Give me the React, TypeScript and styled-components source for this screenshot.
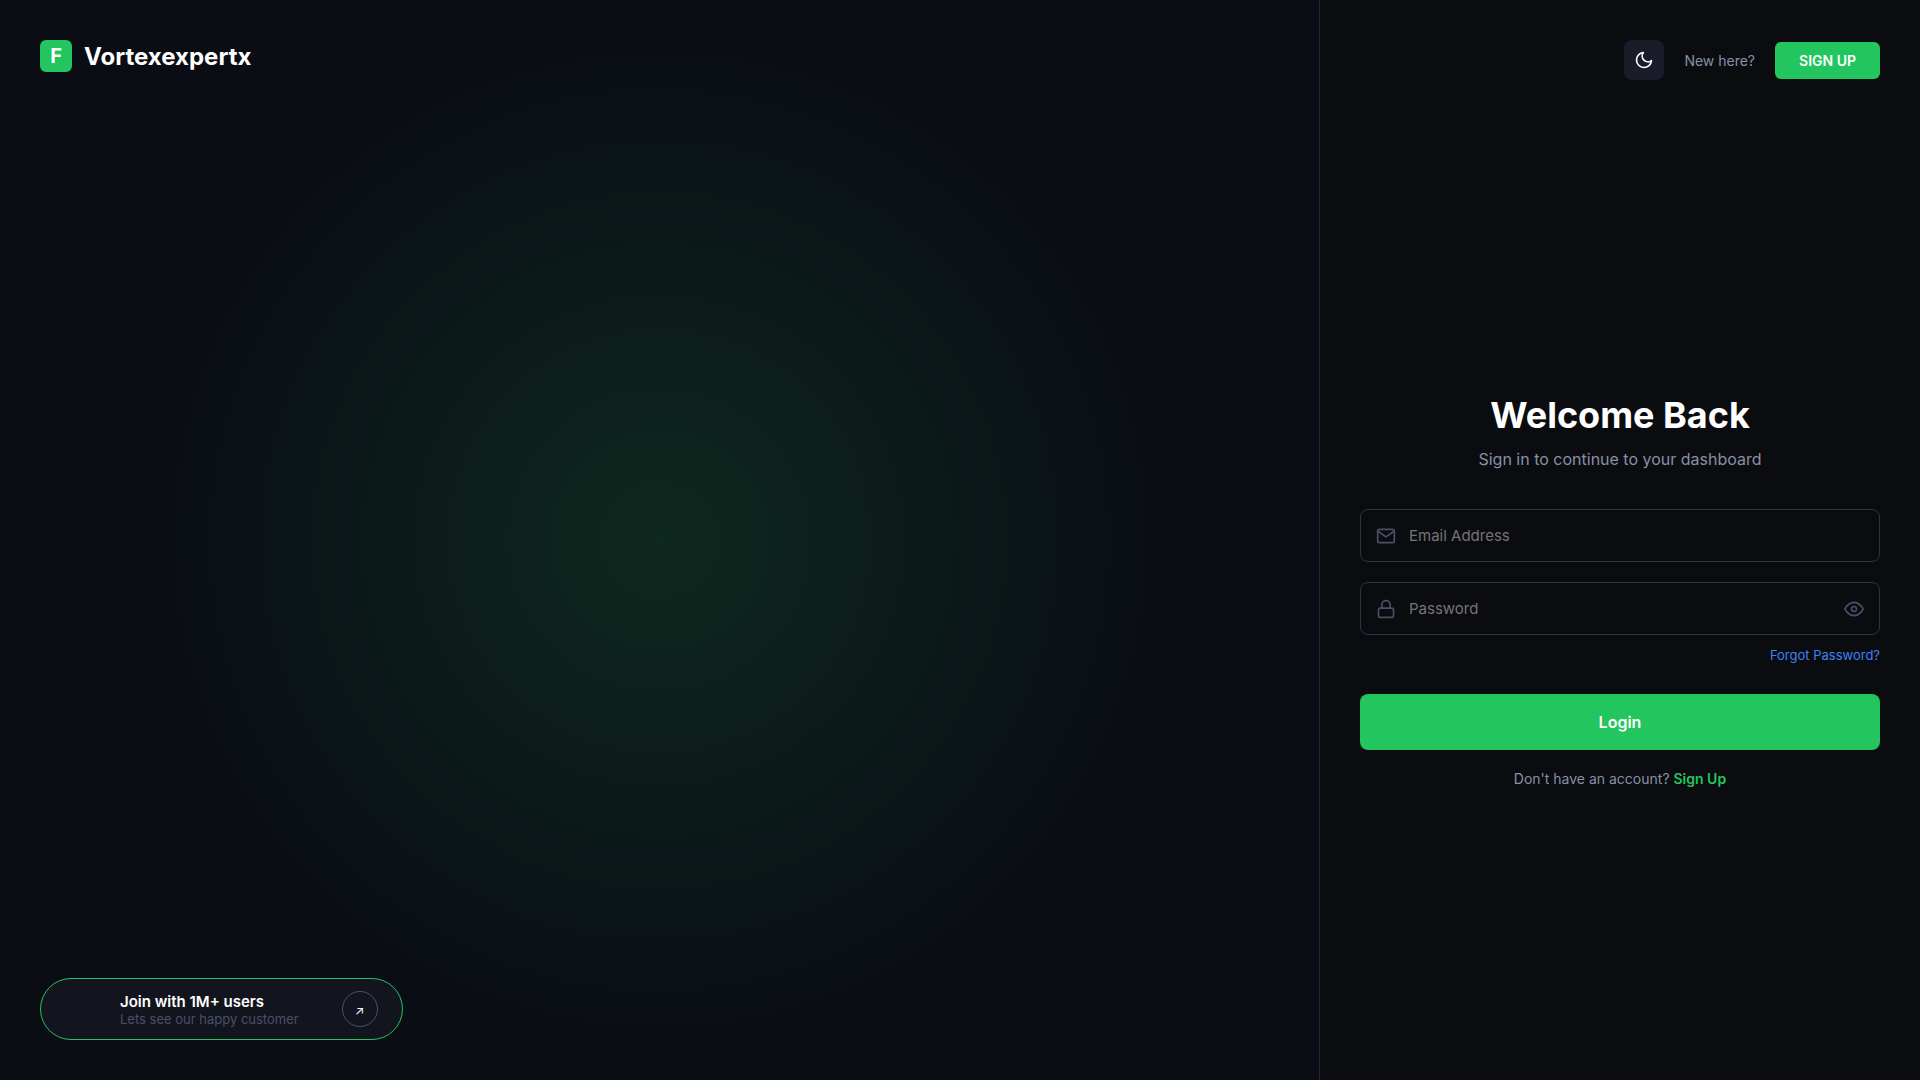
import React, { useState } from 'react';
import styled, { createGlobalStyle } from 'styled-components';
import { FiMoon, FiMail, FiLock, FiEye, FiEyeOff } from 'react-icons/fi';

const GlobalStyle = createGlobalStyle`
  *, *::before, *::after { box-sizing: border-box; }
  body { margin: 0; background: #0b0c10; color: #fff; font-family: Inter, "Liberation Sans", sans-serif; }
  h1, p { margin: 0; }
  a { text-decoration: none; }
  button, input { font-family: inherit; }
`;

const Page = styled.div`
  display: flex;
  min-height: 100vh;
`;

const Showcase = styled.main`
  flex: 1;
  min-width: 0;
  display: flex;
  flex-direction: column;
  justify-content: space-between;
  align-items: flex-start;
  padding: 40px;
  background: radial-gradient(circle at center, rgba(34, 197, 94, 0.15) 0%, transparent 60%), #0a0d14;
`;

const Brand = styled.div`
  display: flex;
  align-items: center;
  gap: 12px;
`;

const BrandMark = styled.span`
  display: grid;
  place-items: center;
  width: 32px;
  height: 32px;
  border-radius: 6px;
  background: #22c55e;
  font-size: 20px;
  font-weight: 700;
`;

const BrandName = styled.span`
  font-size: 24px;
  line-height: 29px;
  font-weight: 700;
`;

const JoinCard = styled.section`
  display: flex;
  align-items: center;
  gap: 43px;
  padding: 12px 24px 12px 79px;
  border: 1px solid #22c55e;
  border-radius: 32px;
  background: #13151e;
`;

const JoinTitle = styled.p`
  font-size: 15px;
  line-height: 19px;
  font-weight: 600;
`;

const JoinNote = styled.p`
  font-size: 13px;
  line-height: 16px;
  color: #4a5068;
`;

const RoundButton = styled.button`
  display: grid;
  place-items: center;
  width: 36px;
  height: 36px;
  padding: 2px 0 0;
  border: 1px solid #4a5068;
  border-radius: 50%;
  background: transparent;
  color: #fff;
  font-size: 12px;
  cursor: pointer;
`;

const Panel = styled.aside`
  display: flex;
  flex-direction: column;
  width: 601px;
  padding: 40px;
  border-left: 1px solid #252a38;
  background: #0b0c10;
`;

const TopBar = styled.header`
  display: flex;
  align-items: center;
  justify-content: flex-end;
  gap: 20px;
  margin-bottom: 60px;
`;

const ThemeButton = styled.button`
  display: grid;
  place-items: center;
  width: 40px;
  height: 40px;
  padding: 0;
  border: 0;
  border-radius: 8px;
  background: #1a1d29;
  color: #fff;
  cursor: pointer;
`;

const Muted = styled.span`
  font-size: 14px;
  color: #8890a6;
`;

const SignUpButton = styled.button`
  padding: 10px 24px;
  border: 0;
  border-radius: 6px;
  background: #22c55e;
  color: #fff;
  font-size: 14px;
  line-height: 17px;
  font-weight: 600;
  cursor: pointer;
`;

const FormArea = styled.div`
  flex: 1;
  display: flex;
  flex-direction: column;
  justify-content: center;
`;

const Title = styled.h1`
  text-align: center;
  font-size: 36px;
  line-height: 44px;
  font-weight: 700;
`;

const Subtitle = styled.p`
  margin-top: 12px;
  text-align: center;
  font-size: 16px;
  line-height: 20px;
  color: #8890a6;
`;

const Form = styled.form`
  display: flex;
  flex-direction: column;
  margin-top: 40px;
`;

const Field = styled.label`
  display: flex;
  align-items: center;
  gap: 13px;
  height: 53px;
  padding: 0 15px;
  margin-bottom: 20px;
  border: 1px solid #2d3348;
  border-radius: 8px;
  color: #4a5068;
`;

const Input = styled.input`
  flex: 1;
  min-width: 0;
  padding: 0;
  border: 0;
  outline: 0;
  background: transparent;
  color: #fff;
  font-size: 15px;
  &::placeholder { color: #757575; }
`;

const RevealButton = styled.button`
  display: flex;
  padding: 0;
  border: 0;
  background: transparent;
  color: inherit;
  cursor: pointer;
`;

const ForgotLink = styled.a`
  align-self: flex-end;
  margin-top: -8px;
  font-size: 13px;
  line-height: 16px;
  color: #3b82f6;
`;

const LoginButton = styled.button`
  margin-top: 31px;
  padding: 18px;
  border: 0;
  border-radius: 8px;
  background: #22c55e;
  color: #fff;
  font-size: 16px;
  line-height: 20px;
  font-weight: 600;
  cursor: pointer;
`;

const AccountLine = styled.p`
  margin-top: 20px;
  text-align: center;
  font-size: 14px;
  line-height: 17px;
  color: #8890a6;
`;

const SignUpLink = styled.a`
  color: #22c55e;
  font-weight: 600;
`;

export default function App() {
  const [visible, setVisible] = useState(false);
  return (
    <Page>
      <GlobalStyle />
      <Showcase>
        <Brand>
          <BrandMark>F</BrandMark>
          <BrandName>Vortexexpertx</BrandName>
        </Brand>
        <JoinCard>
          <div>
            <JoinTitle>Join with 1M+ users</JoinTitle>
            <JoinNote>Lets see our happy customer</JoinNote>
          </div>
          <RoundButton aria-label="See customers">↗</RoundButton>
        </JoinCard>
      </Showcase>
      <Panel>
        <TopBar>
          <ThemeButton aria-label="Toggle theme"><FiMoon size={20} /></ThemeButton>
          <Muted>New here?</Muted>
          <SignUpButton>SIGN UP</SignUpButton>
        </TopBar>
        <FormArea>
          <Title>Welcome Back</Title>
          <Subtitle>Sign in to continue to your dashboard</Subtitle>
          <Form onSubmit={(e) => e.preventDefault()}>
            <Field>
              <FiMail size={20} />
              <Input type="email" placeholder="Email Address" aria-label="Email Address" />
            </Field>
            <Field>
              <FiLock size={20} />
              <Input type={visible ? 'text' : 'password'} placeholder="Password" aria-label="Password" />
              <RevealButton type="button" aria-label="Show password" onClick={() => setVisible(!visible)}>
                {visible ? <FiEyeOff size={20} /> : <FiEye size={20} />}
              </RevealButton>
            </Field>
            <ForgotLink href="#forgot">Forgot Password?</ForgotLink>
            <LoginButton type="submit">Login</LoginButton>
          </Form>
          <AccountLine>Don't have an account? <SignUpLink href="#signup">Sign Up</SignUpLink></AccountLine>
        </FormArea>
      </Panel>
    </Page>
  );
}
